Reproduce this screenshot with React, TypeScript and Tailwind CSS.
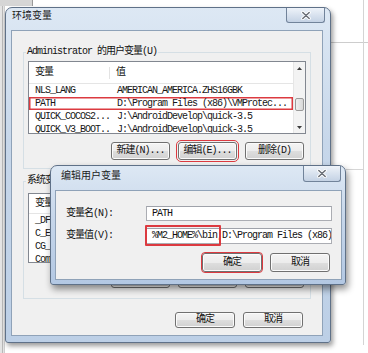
import React from "react"

type Row = [string, string]

const userRows: Row[] = [
  ["NLS_LANG", "AMERICAN_AMERICA.ZHS16GBK"],
  ["PATH", "D:\\Program Files (x86)\\VMProtec..."],
  ["QUICK_COCOS2...", "J:\\AndroidDevelop\\quick-3.5"],
  ["QUICK_V3_BOOT...", "J:\\AndroidDevelop\\quick-3.5"],
]

const sysRows: Row[] = [
  ["_DFX_INSTALL...", "C:\\Program Files\\DFX"],
  ["C_EM64T_RED...", "C:\\Program Files\\Intel"],
  ["CG_BOOST_ROOT", "D:\\boost"],
  ["ComSpec", "C:\\Windows\\system32\\cmd.exe"],
]

function CloseButton({ className }: { className: string }) {
  return (
    <div
      className={`absolute flex items-center justify-center rounded-b-[3px] border border-t-0 border-[#71839a] bg-gradient-to-b from-[#eef3f9] to-[#c4d2e4] ${className}`}
    >
      <svg width="10" height="9" viewBox="0 0 10 9">
        <path d="M1.8 1.5l6.4 6M8.2 1.5l-6.4 6" stroke="#ffffff" strokeWidth="3.2" strokeLinecap="round" />
        <path d="M1.8 1.5l6.4 6M8.2 1.5l-6.4 6" stroke="#6a6f77" strokeWidth="1.5" strokeLinecap="round" />
      </svg>
    </div>
  )
}

function Btn({ label, className }: { label: string; className: string }) {
  return (
    <div
      className={`flex items-center justify-center rounded-[3px] border border-[#707070] bg-[linear-gradient(#f4f4f4_0%,#ececec_50%,#dedede_51%,#d1d1d1_100%)] shadow-[inset_0_0_0_1px_#fbfbfb] text-[#111] ${className}`}
    >
      {label}
    </div>
  )
}

function VarList({ rows, head, rowH, mark, height }: { rows: Row[]; head: string; rowH: string; mark?: number; height: string }) {
  return (
    <div className={`flex overflow-hidden border border-[#828790] bg-white ${height}`}>
      <div className="flex min-w-0 flex-1 flex-col">
        <div className={`flex shrink-0 items-center border-b border-[#e5e5e5] ${head}`}>
          <div className="w-[81px] border-r border-[#e3e3e3] pl-[6px]">变量</div>
          <div className="pl-[6px]">值</div>
        </div>
        {rows.map((r, i) => (
          <div
            key={i}
            className={`flex shrink-0 items-center whitespace-nowrap text-[#161616] ${rowH} ${
              i === mark ? "shadow-[inset_0_0_0_1.5px_#dc3a40]" : ""
            }`}
          >
            <div className="w-[82px] overflow-hidden pl-[6px]">{r[0]}</div>
            <div className="min-w-0 flex-1 overflow-hidden pl-[6px]">{r[1]}</div>
          </div>
        ))}
      </div>
      <div className="flex w-[12px] shrink-0 flex-col border-l border-[#e6e6e6] bg-[#f3f3f3]">
        <div className="flex h-[12px] items-center justify-center">
          <svg width="5" height="3" viewBox="0 0 5 3">
            <path d="M0 3L2.5 0L5 3Z" fill="#3c3c3c" />
          </svg>
        </div>
        <div className="h-[24px]" />
        <div className="mx-[1px] h-[13px] rounded-[2px] border border-[#9a9a9a] bg-gradient-to-r from-[#f0f0f0] to-[#d8d8d8]" />
        <div className="flex-1" />
        <div className="flex h-[12px] items-center justify-center">
          <svg width="5" height="3" viewBox="0 0 5 3">
            <path d="M0 0L2.5 3L5 0Z" fill="#3c3c3c" />
          </svg>
        </div>
      </div>
    </div>
  )
}

export default function App() {
  return (
    <div className="relative h-[353px] w-[368px] overflow-hidden bg-white font-['Liberation_Mono','Noto_Sans_CJK_SC',monospace] text-[10px] leading-[12px] tracking-[-1px] text-[#111]">
      {/* desktop behind */}
      <div className="absolute left-0 top-0 h-full w-[5px] border-r border-[#cfcfcf] bg-[#e4e4e4]">
        <div className="ml-[2px] h-full w-[1px] bg-[#b8b8b8]" />
      </div>
      <div className="absolute left-0 top-0 h-[6px] w-[33px] border-r border-[#9a9a9a] bg-[#d6d6d6]" />
      <div className="absolute left-[331px] top-[42px] h-[1px] w-[37px] bg-[#cdcdcd]" />
      <div className="absolute left-[363px] top-0 h-[345px] w-[1px] bg-[#d4d4d4]" />
      <div className="absolute left-[346px] top-[169px] h-[1px] w-[17px] bg-[#d6d6d6]" />

      {/* 环境变量 */}
      <div className="absolute left-[5px] top-[7px] flex h-[336px] w-[326px] flex-col rounded-t-[7px] rounded-b-[3px] border border-[#5f7188] bg-[linear-gradient(#dde8f4,#c7d7ea_40%,#bccfe6)] pb-[6px] pl-[5px] pr-[7px] shadow-[2px_3px_5px_rgba(0,0,0,0.4)]">
        <CloseButton className="right-[5px] top-0 h-[15px] w-[39px]" />
        <div className="h-[22px] pl-[1px] pt-[3px] tracking-normal text-[#1b1b1b]">环境变量</div>
        <div className="flex flex-1 flex-col border border-[#8fa2b8] bg-[#f0f0f0] px-[11px] pt-[15px]">
          <fieldset className="border border-[#d5dfe5] px-[4px] pb-[8px]">
            <legend className="ml-[-2px] px-[1px] leading-[12px]">Administrator 的用户变量(U)</legend>
            <div className="mt-[3px]">
              <VarList rows={userRows} head="h-[22px]" rowH="h-[13px]" mark={1} height="h-[73px]" />
            </div>
            <div className="mt-[8px] flex justify-end gap-[8px] pr-[2px]">
              <Btn label="新建(N)..." className="h-[18px] w-[59px]" />
              <Btn label="编辑(E)..." className="h-[18px] w-[59px] outline outline-[1.5px] outline-offset-[1px] outline-[#dc3a40]" />
              <Btn label="删除(D)" className="h-[18px] w-[59px]" />
            </div>
          </fieldset>
          <fieldset className="mt-[6px] border border-[#d5dfe5] px-[4px] pb-[10px]">
            <legend className="ml-[-2px] px-[1px] leading-[12px]">系统变量(S)</legend>
            <div className="mt-[6px]">
              <VarList rows={sysRows} head="h-[20px]" rowH="h-[13px]" height="h-[70px]" />
            </div>
            <div className="mt-[7px] flex justify-end gap-[8px] pr-[2px]">
              <Btn label="新建(W)..." className="h-[18px] w-[59px]" />
              <Btn label="编辑(I)..." className="h-[18px] w-[59px]" />
              <Btn label="删除(L)" className="h-[18px] w-[59px]" />
            </div>
          </fieldset>
          <div className="mt-[13px] flex justify-end gap-[8px] pr-[8px]">
            <Btn label="确定" className="h-[16px] w-[60px]" />
            <Btn label="取消" className="h-[16px] w-[60px]" />
          </div>
        </div>
      </div>

      {/* 编辑用户变量 */}
      <div className="absolute left-[50px] top-[165px] flex h-[120px] w-[296px] flex-col rounded-t-[7px] rounded-b-[3px] border border-[#5f7188] bg-[linear-gradient(#dde8f4,#c6d6ea_45%,#b3c8e3)] pb-[4px] pl-[4px] pr-[3px] shadow-[2px_4px_7px_rgba(0,0,0,0.45)]">
        <CloseButton className="right-[4px] top-0 h-[16px] w-[38px]" />
        <div className="h-[24px] pl-[6px] pt-[5px] tracking-normal text-[#1b1b1b]">编辑用户变量</div>
        <div className="flex flex-1 flex-col border border-[#8fa2b8] bg-[#f0f0f0] pl-[10px] pr-[10px] pt-[15px]">
          <div className="grid grid-cols-[80px_186px] items-center gap-y-[7px]">
            <div>变量名(N):</div>
            <div className="flex h-[15px] items-center overflow-hidden whitespace-nowrap border border-[#abadb3] border-t-[#9fa2aa] bg-white pl-[5px]">
              PATH
            </div>
            <div>变量值(V):</div>
            <div className="relative">
              <div className="flex h-[16px] items-center overflow-hidden whitespace-nowrap border border-[#abadb3] border-t-[#9fa2aa] bg-white pl-[5px]">
                %M2_HOME%\bin;D:\Program Files (x86)\VMProtect
              </div>
              <div className="absolute left-[-1px] top-[-3px] h-[21px] w-[76px] rounded-[1px] border-2 border-solid border-[#dc3a40]" />
            </div>
          </div>
          <div className="mt-[9px] flex justify-end gap-[8px] pr-[1px]">
            <Btn label="确定" className="h-[19px] w-[60px] outline outline-[1.5px] outline-offset-0 outline-[#dc3a40]" />
            <Btn label="取消" className="h-[19px] w-[60px]" />
          </div>
        </div>
      </div>
    </div>
  )
}
